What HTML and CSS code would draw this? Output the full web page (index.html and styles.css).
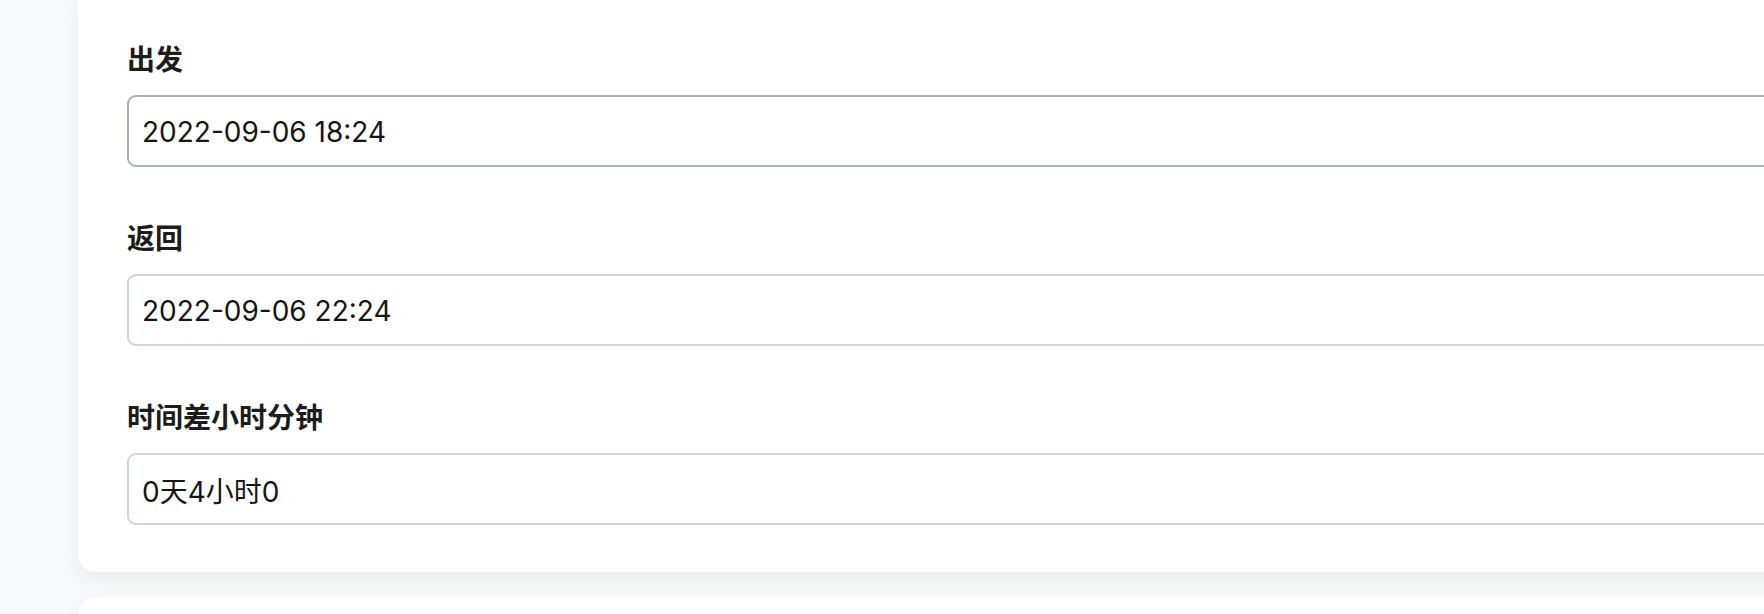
FILE: index.html
```html
<!DOCTYPE html>
<html lang="zh-CN">
<head>
<meta charset="utf-8">
<title>时间差</title>
<link rel="stylesheet" href="styles.css">
</head>
<body>
<div class="page">
  <div class="card">
    <div class="field">
      <label class="label">出发</label>
      <div class="input input-focus">2022-09-06 18:24</div>
    </div>
    <div class="field">
      <label class="label">返回</label>
      <div class="input">2022-09-06 22:24</div>
    </div>
    <div class="field last">
      <label class="label">时间差小时分钟</label>
      <div class="input">0天4小时0</div>
    </div>
  </div>
  <div class="card card-next"></div>
</div>
</body>
</html>
```
FILE: styles.css
```css
html, body {
  margin: 0;
  padding: 0;
  height: 100%;
  overflow: hidden;
}
body {
  background: #f8f9fb;
  font-family: "Inter", "Noto Sans CJK SC", sans-serif;
  color: #161616;
}
.page {
  padding-left: 78px;
  width: 1900px;
}
.card {
  background: #ffffff;
  border-radius: 0 0 18px 18px;
  padding: 38px 48px 47px 49px;
  box-shadow: 0 6px 18px rgba(30, 40, 70, 0.07);
}
.field {
  display: flex;
  flex-direction: column;
  margin-bottom: 50px;
}
.field.last {
  margin-bottom: 0;
}
.label {
  font-family: "Noto Sans CJK SC", sans-serif;
  font-weight: 700;
  font-size: 28px;
  line-height: 40px;
  margin-bottom: 17px;
  color: #1c1c1c;
}
.input {
  box-sizing: border-box;
  height: 72px;
  border: 2px solid #cbd4e0;
  border-radius: 9px;
  padding: 2px 13px 0;
  display: flex;
  align-items: center;
  font-size: 28px;
  color: #161616;
}
.input-focus {
  border-color: #abb0ba;
}
.card-next {
  margin-top: 25px;
  border-radius: 18px 18px 0 0;
  height: 40px;
  padding: 0;
}
```
